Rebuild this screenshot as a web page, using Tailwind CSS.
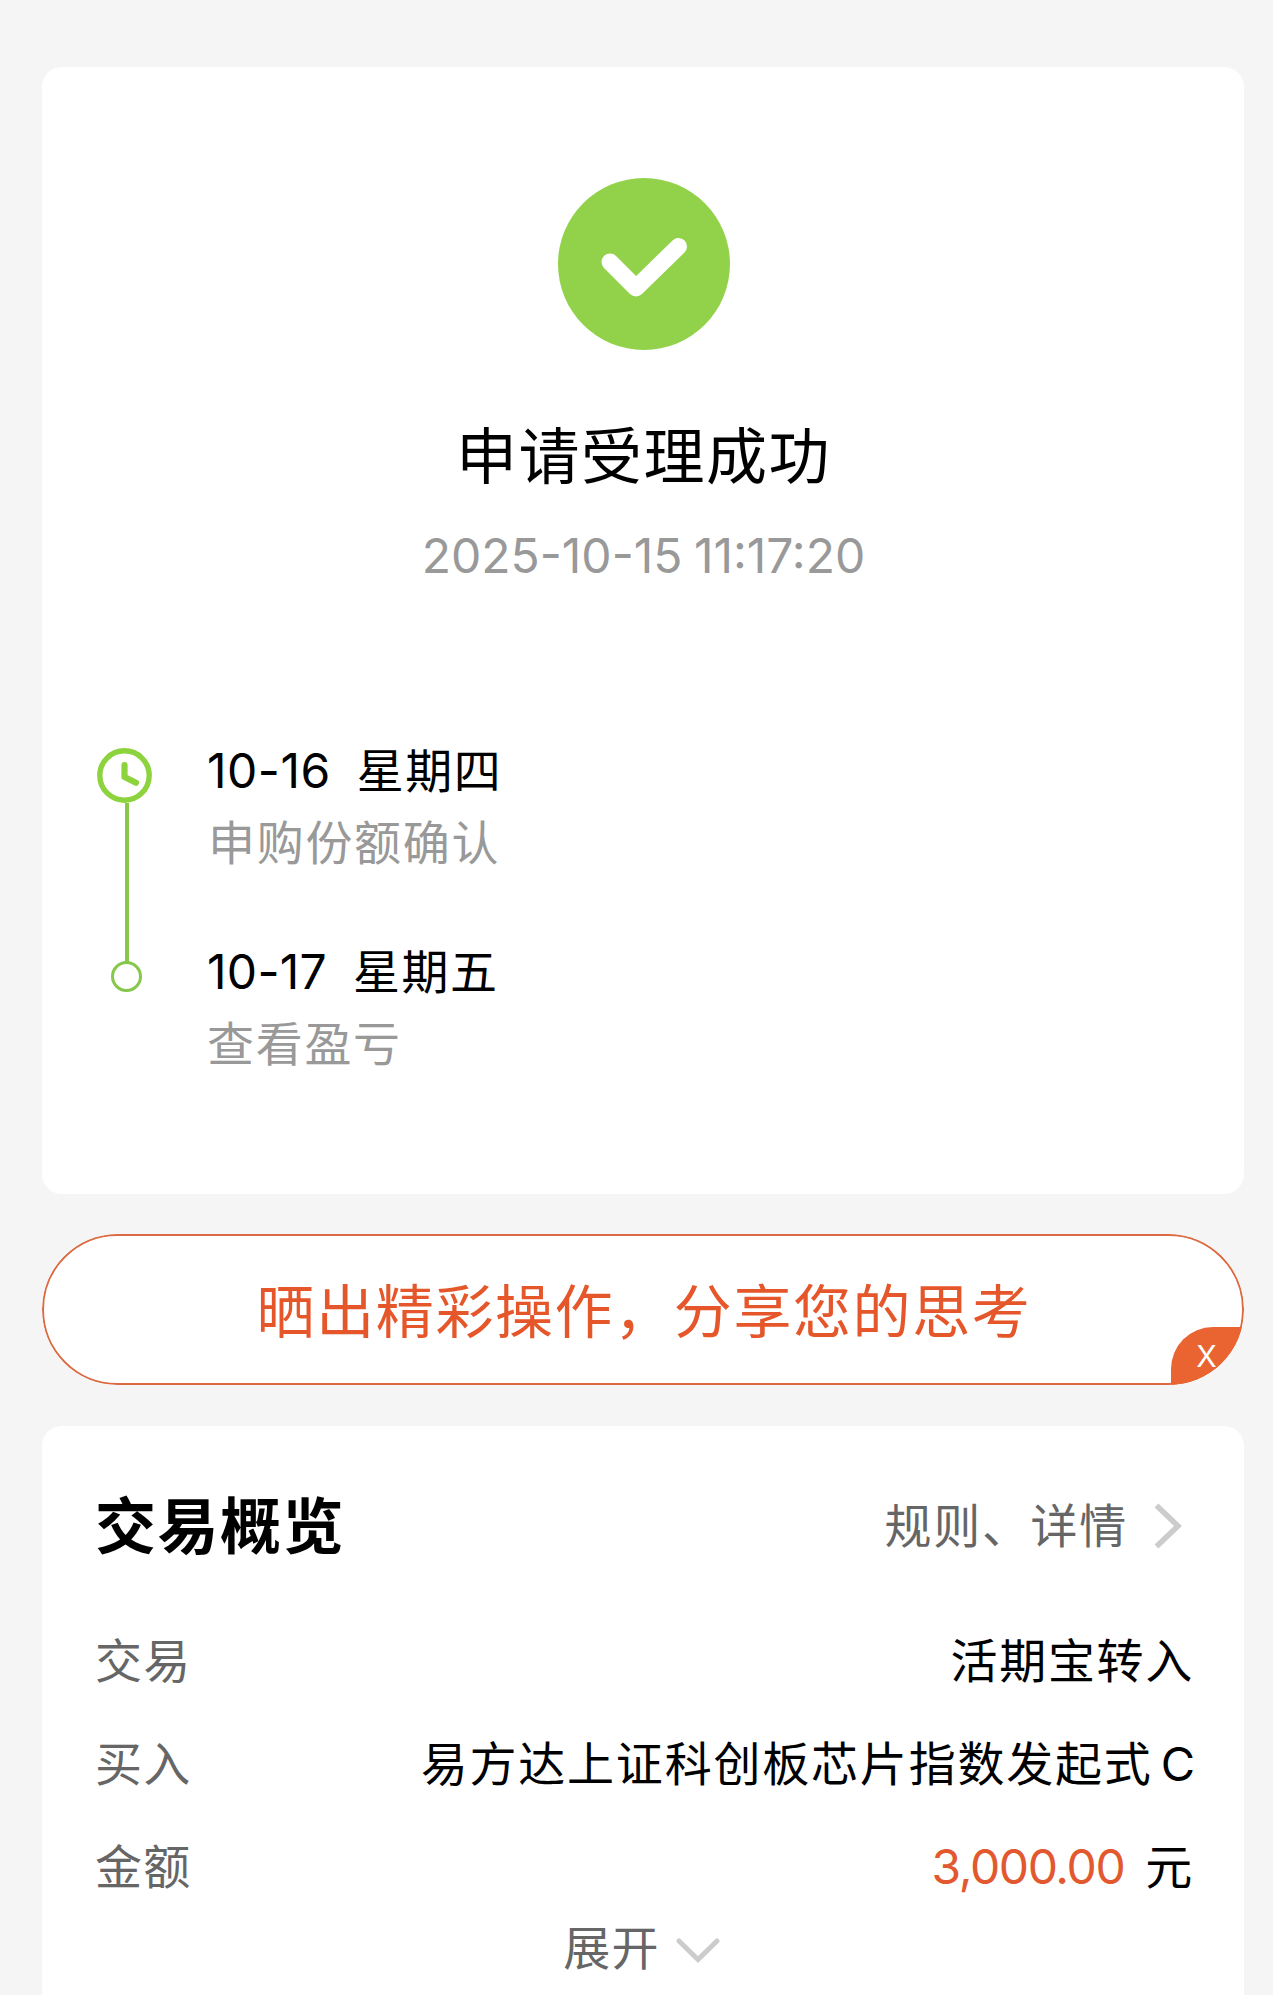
<!doctype html>
<html lang="zh-CN">
<head>
  <meta charset="UTF-8">
  <meta name="viewport" content="width=device-width, initial-scale=1.0">
  <title>交易结果</title>
  <script src="https://cdn.jsdelivr.net/npm/@tailwindcss/browser@4"></script>
</head>
<body class="bg-[#f5f5f5] h-[1995px] overflow-hidden pt-[67px] pl-[42px] pr-[29px] font-['Inter','Noto_Sans_CJK_SC',sans-serif] text-[47px] leading-[72px] text-black">

  <!-- Hasil -->
  <section class="bg-white rounded-[20px] h-[1127px] pt-[111px]">
    <svg class="block ml-[516px] w-[172px] h-[172px]" viewBox="0 0 172 172" fill="none">
      <circle cx="86" cy="86" r="86" fill="#92d24a" />
      <path d="M52 84L78 110L120.500 68.500" stroke="#fff" stroke-width="17" stroke-linecap="round" stroke-linejoin="round" />
    </svg>
    <h1 class="mt-[62px] pl-[1px] text-center text-[61px] leading-[90px] tracking-[1.5px]">申请受理成功</h1>
    <p class="mt-[18px] pl-[1px] text-center text-[48px] text-[#999] [word-spacing:-2px]">2025-10-15 11:17:20</p>

    <!-- Timeline -->
    <div class="mt-[142px] pl-[55px] flex">
      <svg class="w-[55px] h-[246px] mt-[14px] mr-[55px] shrink-0" viewBox="0 0 55 246" fill="none">
        <circle cx="27.500" cy="27.500" r="24.700" stroke="#8cd33e" stroke-width="5.400" />
        <path d="M27.500 17V29L39 34.700" stroke="#8cd33e" stroke-width="6.200" stroke-linecap="round" stroke-linejoin="round" />
        <path d="M30 55V214" stroke="#86c74c" stroke-width="4" />
        <circle cx="29.500" cy="228.500" r="14" stroke="#86c74c" stroke-width="3" />
      </svg>
      <ul class="flex flex-col gap-[57px] pt-[1px]">
        <li>
          <p class="flex gap-[26px]"><span class="text-[48px] tracking-[0.5px]">10-16</span><span class="tracking-[1.5px]">星期四</span></p>
          <p class="pl-[1px] text-[#999] tracking-[1.7px]">申购份额确认</p>
        </li>
        <li>
          <p class="flex gap-[26px]"><span class="text-[48px] tracking-[0.3px]">10-17</span><span class="tracking-[1.5px]">星期五</span></p>
          <p class="text-[#999] tracking-[1.7px]">查看盈亏</p>
        </li>
      </ul>
    </div>
  </section>

  <!-- Banner -->
  <section class="relative mt-[40px] h-[151px] rounded-full bg-white overflow-hidden flex items-center justify-center">
    <span class="absolute inset-0 rounded-full border-2 border-[#dc6a40]"></span>
    <p class="pt-[4px] pl-[2px] text-[58px] leading-[90px] tracking-[1.6px] text-[#e5572b]">晒出精彩操作，分享您的思考</p>
    <button class="absolute right-0 bottom-0 w-[73px] h-[58px] pr-[2px] rounded-tl-[42px] bg-[#e96430] text-white text-[30px] leading-[56px]">X</button>
  </section>

  <!-- Ringkasan transaksi -->
  <section class="mt-[41px] bg-white rounded-t-[20px] h-[600px] pt-[55px] pl-[53px] pr-[50px]">
    <div class="flex items-center justify-between h-[90px]">
      <h2 class="pt-[1px] text-[61px] leading-[90px] font-bold tracking-[1.5px]">交易概览</h2>
      <a class="flex items-center text-[#666] tracking-[1.7px] mr-[12px]">
        规则、详情
        <svg class="w-[28px] h-[46px] ml-[26px]" viewBox="0 0 28 46" fill="none">
          <path d="M2.500 2.500L24 23L2.500 43.500" stroke="#ccc" stroke-width="5.500" />
        </svg>
      </a>
    </div>
    <dl class="mt-[54px] flex flex-col gap-[31px]">
      <div class="flex justify-between">
        <dt class="text-[#666] tracking-[1.2px]">交易</dt>
        <dd class="tracking-[1.7px]">活期宝转入</dd>
      </div>
      <div class="flex justify-between">
        <dt class="text-[#666] tracking-[1.2px]">买入</dt>
        <dd class="flex gap-[8px] -mr-[1px]"><span class="tracking-[1.8px]">易方达上证科创板芯片指数发起式</span><span>C</span></dd>
      </div>
      <div class="flex justify-between">
        <dt class="text-[#666] tracking-[1.2px]">金额</dt>
        <dd class="flex gap-[21px]"><span class="text-[48px] tracking-[-1.4px] text-[#e2592f]">3,000.00</span><span class="tracking-[1.7px]">元</span></dd>
      </div>
    </dl>
    <a class="mt-[9px] mr-[6px] flex items-center justify-center text-[#666] tracking-[1.2px]">
      展开
      <svg class="w-[44px] h-[26px] ml-[16px] mt-[6px]" viewBox="0 0 44 26" fill="none">
        <path d="M3 3L22 21.500L41 3" stroke="#ccc" stroke-width="5" stroke-linecap="round" />
      </svg>
    </a>
  </section>

</body>
</html>
